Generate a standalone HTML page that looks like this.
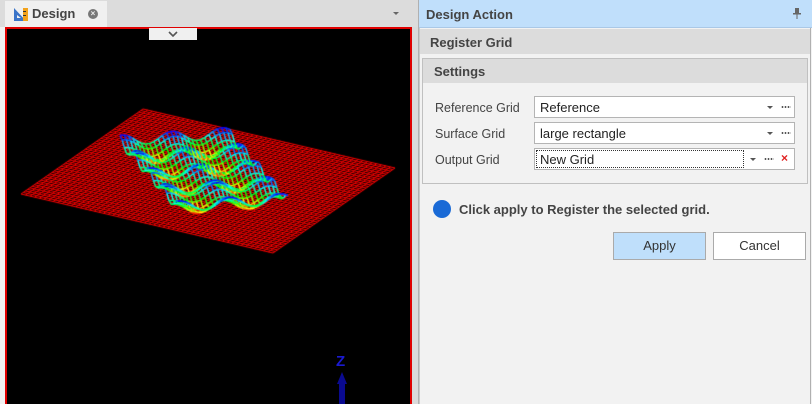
<!DOCTYPE html>
<html><head><meta charset="utf-8"><style>
*{margin:0;padding:0;box-sizing:border-box}
body{width:812px;height:404px;overflow:hidden;background:#f2f2f2;font-family:"Liberation Sans",sans-serif;font-size:12px;color:#333;position:relative}
.abs{position:absolute}
.lbl{position:absolute;left:435px;font-size:12.5px;color:#444}
.inp{position:absolute;left:534px;width:261px;height:22px;background:#fff;border:1px solid #b4b4b4;font-size:13px;color:#222;padding:3px 5px}
.dd{position:absolute;top:9px;width:0;height:0;border-left:3px solid transparent;border-right:3px solid transparent;border-top:3px solid #555}
.dots{position:absolute;top:9px;width:10px;height:2px;background:radial-gradient(circle,#555 0.8px,transparent 1px) 0 0/3px 2px repeat-x}
.btn{position:absolute;top:232px;height:28px;border:1px solid #aaa;text-align:center;line-height:26px;font-size:13px;color:#333}
</style></head><body>
<div class="abs" style="left:0;top:0;width:418px;height:27px;background:#dcdcdc"></div>
<div class="abs" style="left:5px;top:1px;width:102px;height:26px;background:#f0f0f0"></div>
<svg class="abs" style="left:13px;top:6px" width="16" height="16"><path d="M1 2 L1 15 L13 15 Z" fill="#3a74c8"/><path d="M4 9 L4 12 L8 12 Z" fill="#f0f0f0"/><rect x="10" y="2" width="5" height="13" fill="#f2a21b"/><rect x="10" y="5" width="3" height="1" fill="#333"/><rect x="10" y="9" width="3" height="1" fill="#333"/></svg>
<div class="abs" style="left:32px;top:6px;font-weight:bold;font-size:13px;color:#444">Design</div>
<div class="abs" style="left:88px;top:9px;width:10px;height:10px;border-radius:50%;background:#777;color:#eee;font-size:8px;line-height:10px;text-align:center;font-weight:bold">×</div>
<div class="abs" style="left:393px;top:12px;border-left:3px solid transparent;border-right:3px solid transparent;border-top:3px solid #666"></div>
<div class="abs" style="left:412px;top:27px;width:6px;height:377px;background:#dadada"></div>
<div class="abs" style="left:418px;top:0;width:1px;height:404px;background:#b0b0b0"></div>
<div class="abs" style="left:5px;top:27px;width:407px;height:377px;background:#000;border:2px solid #e00000;border-bottom:none"></div>
<canvas id="c" class="abs" style="left:7px;top:29px" width="403" height="375"></canvas>
<div class="abs" style="left:149px;top:28px;width:48px;height:12px;background:#f0f0f0"></div>
<svg class="abs" style="left:168px;top:30px" width="10" height="8"><path d="M1 2 L5 6 L9 2" stroke="#555" stroke-width="1.6" fill="none"/></svg>
<div class="abs" style="left:336px;top:353px;color:#1a1ad0;font-size:15px;font-weight:bold">Z</div>
<svg class="abs" style="left:336px;top:372px" width="12" height="32"><path d="M6 0 L11 12 L1 12 Z" fill="#0a0a90"/><rect x="3" y="12" width="6" height="20" fill="#0a0a90"/></svg>
<div class="abs" style="left:419px;top:0;width:393px;height:28px;background:#c0dffb;border-bottom:1px solid #aac8e6"></div>
<div class="abs" style="left:426px;top:7px;font-weight:bold;font-size:13px;color:#444">Design Action</div>
<svg class="abs" style="left:793px;top:8px" width="8" height="11"><rect x="2" y="0" width="4" height="6" fill="#666"/><rect x="0" y="5" width="8" height="1.5" fill="#666"/><rect x="3.5" y="6" width="1" height="5" fill="#666"/></svg>
<div class="abs" style="left:419px;top:28px;width:392px;height:376px;border-left:1px solid #c8c8c8;border-right:1px solid #b0b0b0"></div>
<div class="abs" style="left:420px;top:29px;width:390px;height:25px;background:#dcdcdc"></div>
<div class="abs" style="left:430px;top:35px;font-weight:bold;font-size:13px;color:#444">Register Grid</div>
<div class="abs" style="left:422px;top:58px;width:386px;height:126px;border:1px solid #c0c0c0;background:#f2f2f2"></div>
<div class="abs" style="left:423px;top:59px;width:384px;height:24px;background:#dcdcdc"></div>
<div class="abs" style="left:434px;top:64px;font-weight:bold;font-size:13px;color:#444">Settings</div>
<div class="lbl" style="top:101px">Reference Grid</div>
<div class="lbl" style="top:127px">Surface Grid</div>
<div class="lbl" style="top:153px">Output Grid</div>
<div class="inp" style="top:96px">Reference<div class="dd" style="left:232px"></div><div class="dots" style="left:246px"></div></div>
<div class="inp" style="top:122px">large rectangle<div class="dd" style="left:232px"></div><div class="dots" style="left:246px"></div></div>
<div class="inp" style="top:148px"><div class="abs" style="left:1px;top:1px;width:208px;height:18px;border:1px dotted #333"></div>New Grid<div class="dd" style="left:215px"></div><div class="dots" style="left:229px"></div><div class="abs" style="left:246px;top:2px;color:#e02020;font-size:12px;font-weight:bold">×</div></div>
<div class="abs" style="left:433px;top:200px;width:18px;height:18px;border-radius:50%;background:#1a6ad6"></div>
<div class="abs" style="left:459px;top:202px;font-weight:bold;font-size:13px;color:#444">Click apply to Register the selected grid.</div>
<div class="btn" style="left:613px;width:93px;background:#bfdffb">Apply</div>
<div class="btn" style="left:713px;width:93px;background:#fff">Cancel</div>
<script>
var c=document.getElementById('c').getContext('2d');
c.translate(-7,-29);
function P(u,v){return [143+252*u-122*v,109+59*u+85*v];}
c.strokeStyle='#ff0000';c.lineWidth=1;
var N=55;
for(var i=0;i<=N;i++){var t=i/N;
 var a=P(t,0),b=P(t,1);c.beginPath();c.moveTo(a[0],a[1]);c.lineTo(b[0],b[1]);c.stroke();
 a=P(0,t);b=P(1,t);c.beginPath();c.moveTo(a[0],a[1]);c.lineTo(b[0],b[1]);c.stroke();}
function H(s,t){return Math.sin(2*Math.PI*2.2*s+1.3)*0.55+Math.sin(2*Math.PI*4*t+1.57)*0.55;}
function W(s,t){var h=H(s,t);return [120+110*s+58*t,146-8*s+66*t-h*10,h];}
function col(h){var n=(h+1.1)/2.2;n=Math.max(0,Math.min(1,n));n=Math.pow(n,0.8);var hue=n*245;return 'hsl('+hue+',100%,50%)';}
var M=26;
c.lineWidth=1.5;
for(var i=0;i<=M;i++){for(var j=0;j<M;j++){
 var s=i/M,t0=j/M,t1=(j+1)/M;
 var a=W(s,t0),b=W(s,t1);c.strokeStyle=col((a[2]+b[2])/2);c.beginPath();c.moveTo(a[0],a[1]);c.lineTo(b[0],b[1]);c.stroke();
 a=W(t0,s);b=W(t1,s);c.strokeStyle=col((a[2]+b[2])/2);c.beginPath();c.moveTo(a[0],a[1]);c.lineTo(b[0],b[1]);c.stroke();
}}
</script>
</body></html>
